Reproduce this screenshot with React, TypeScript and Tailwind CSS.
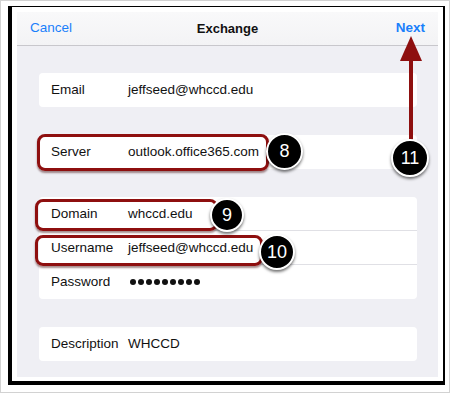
import React from "react";

const Row = ({ label, children, sep }: { label: string; children: React.ReactNode; sep?: boolean }) => (
  <div className="relative h-[34px] flex items-center pl-[12px] text-[13.5px] text-[#111]">
    <div className="w-[77px] shrink-0">{label}</div>
    <div className="flex items-center">{children}</div>
    {sep && <div className="absolute left-0 right-0 bottom-0 h-px bg-[#e0e0e5]" />}
  </div>
);

const Circle = ({ n, x, y, d }: { n: string; x: number; y: number; d: number }) => (
  <div
    className="absolute rounded-full bg-black border-[2.5px] border-white flex items-center justify-center text-white text-[18px] shadow-[0_2px_3px_rgba(0,0,0,0.55)]"
    style={{ left: x, top: y, width: d, height: d }}
  >
    {n}
  </div>
);

const RedBox = ({ x, y, w, h }: { x: number; y: number; w: number; h: number }) => (
  <div
    className="absolute rounded-[8px] border-[3px] border-[#8e0f0f] shadow-[0_2px_2px_rgba(60,0,0,0.45)]"
    style={{ left: x, top: y, width: w, height: h }}
  />
);

export default function App() {
  return (
    <div className="relative w-[450px] h-[393px] bg-white border border-[#d2d2d2] overflow-hidden font-['Liberation_Sans',Arial,sans-serif]">
      <div className="ml-[7px] mt-[5px] w-[437px] h-[379px] border-l-4 border-t border-r-2 border-b-4 border-black bg-white pl-[5px] pt-[5px] pr-[5px] pb-[4px]">
        <div className="w-[421px] h-[365px] bg-[#efeff4] flex flex-col">
          <div className="h-[34px] shrink-0 border-b border-[#c8c7cc] bg-gradient-to-b from-[#f9f9fa] to-[#f3f3f5] grid grid-cols-3 items-center px-[13px] text-[13.5px]">
            <span className="text-[#1a7ffb]">Cancel</span>
            <span className="font-bold text-[#111] text-center text-[13px]">Exchange</span>
            <span className="text-[#1a7ffb] text-right font-bold">Next</span>
          </div>
          <div className="flex flex-col gap-[28px] pl-[22px] pr-[21px] pt-[27px]">
            <div className="bg-white rounded-[4px]">
              <Row label="Email">jeffseed@whccd.edu</Row>
            </div>
            <div className="bg-white rounded-[4px]">
              <Row label="Server">outlook.office365.com</Row>
            </div>
            <div className="bg-white rounded-[4px]">
              <Row label="Domain" sep>whccd.edu</Row>
              <Row label="Username" sep>jeffseed@whccd.edu</Row>
              <Row label="Password">
                <div className="flex gap-[2px] ml-[2px]">
                  {Array.from({ length: 9 }).map((_, i) => (
                    <span key={i} className="block w-[6px] h-[6px] rounded-full bg-[#111]" />
                  ))}
                </div>
              </Row>
            </div>
            <div className="bg-white rounded-[4px]">
              <Row label="Description">WHCCD</Row>
            </div>
          </div>
        </div>
      </div>

      <svg className="absolute left-0 top-0" width="450" height="393" viewBox="0 0 450 393">
        <rect x="408" y="56" width="4" height="86" fill="#8e0f0f" />
        <polygon points="399,60 421,60 410,35" fill="#8e0f0f" />
      </svg>

      <RedBox x={36} y={133} w={232} h={37} />
      <RedBox x={34} y={198} w={183} h={32} />
      <RedBox x={34} y={234} w={228} h={31} />

      <Circle n="8" x={265} y={132} d={37} />
      <Circle n="11" x={390} y={138} d={38} />
      <Circle n="9" x={209} y={197} d={34} />
      <Circle n="10" x={258} y={233} d={36} />
    </div>
  );
}
